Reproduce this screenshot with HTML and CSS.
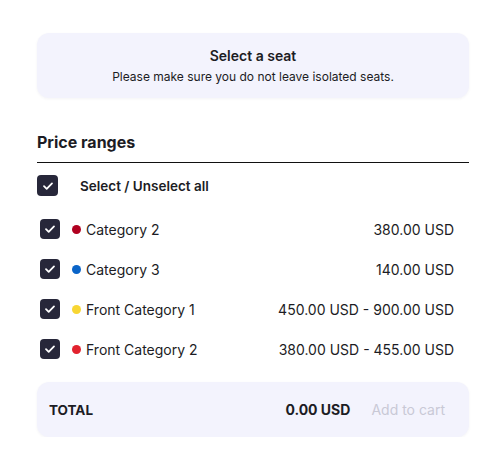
FILE: index.html
```html
<!DOCTYPE html>
<html lang="en">

<head>
    <meta charset="UTF-8" />
    <meta name="viewport" content="width=device-width, initial-scale=1.0" />
    <title>Select a seat</title>
    <link rel="stylesheet" href="styles.css">
</head>

<body>
    <div class="seat-panel">
        <div class="notice-card">
            <h2>Select a seat</h2>
            <p>Please make sure you do not leave isolated seats.</p>
        </div>

        <h3 class="section-title">Price ranges</h3>

        <label class="select-all">
            <span class="checkbox">
                <svg viewBox="0 0 20 20" width="20" height="20"><path d="M6 10.2l2.7 2.6L14 7.4" fill="none" stroke="#fff" stroke-width="1.8" stroke-linecap="round" stroke-linejoin="round"/></svg>
            </span>
            <span class="select-all-text">Select / Unselect all</span>
        </label>

        <ul class="price-list">
            <li class="price-row">
                <span class="checkbox">
                    <svg viewBox="0 0 20 20" width="20" height="20"><path d="M6 10.2l2.7 2.6L14 7.4" fill="none" stroke="#fff" stroke-width="1.8" stroke-linecap="round" stroke-linejoin="round"/></svg>
                </span>
                <span class="dot dot-cat2"></span>
                <span class="category">Category 2</span>
                <span class="price">380.00 USD</span>
            </li>
            <li class="price-row">
                <span class="checkbox">
                    <svg viewBox="0 0 20 20" width="20" height="20"><path d="M6 10.2l2.7 2.6L14 7.4" fill="none" stroke="#fff" stroke-width="1.8" stroke-linecap="round" stroke-linejoin="round"/></svg>
                </span>
                <span class="dot dot-cat3"></span>
                <span class="category">Category 3</span>
                <span class="price">140.00 USD</span>
            </li>
            <li class="price-row">
                <span class="checkbox">
                    <svg viewBox="0 0 20 20" width="20" height="20"><path d="M6 10.2l2.7 2.6L14 7.4" fill="none" stroke="#fff" stroke-width="1.8" stroke-linecap="round" stroke-linejoin="round"/></svg>
                </span>
                <span class="dot dot-front1"></span>
                <span class="category">Front Category 1</span>
                <span class="price">450.00 USD - 900.00 USD</span>
            </li>
            <li class="price-row">
                <span class="checkbox">
                    <svg viewBox="0 0 20 20" width="20" height="20"><path d="M6 10.2l2.7 2.6L14 7.4" fill="none" stroke="#fff" stroke-width="1.8" stroke-linecap="round" stroke-linejoin="round"/></svg>
                </span>
                <span class="dot dot-front2"></span>
                <span class="category">Front Category 2</span>
                <span class="price">380.00 USD - 455.00 USD</span>
            </li>
        </ul>

        <div class="total-card">
            <span class="total-label">TOTAL</span>
            <span class="total-amount">0.00 USD</span>
            <button type="button" class="cart-button" disabled>Add to cart</button>
        </div>
    </div>
</body>

</html>
```

FILE: styles.css
```css
/* Base Styles */
body {
    margin: 0;
    background-color: #fff;
    font-family: "Inter", "Noto Sans", sans-serif;
    color: #1c1c24;
}

.seat-panel {
    width: 432px;
    padding: 33px 0 0 37px;
}

/* Notice Card */
.notice-card {
    background-color: #f3f3fd;
    border-radius: 12px;
    padding: 14px 10px 13px;
    text-align: center;
    box-shadow: 0 1px 3px rgba(40, 40, 80, 0.05);
}

.notice-card h2 {
    margin: 0;
    font-size: 14px;
    font-weight: 600;
    line-height: 18px;
}

.notice-card p {
    margin: 4px 0 0;
    font-size: 12px;
    line-height: 16px;
}

/* Price ranges */
.section-title {
    margin: 34px 0 0;
    font-size: 16px;
    font-weight: 700;
    line-height: 20px;
    padding-bottom: 10px;
    border-bottom: 1.5px solid #111;
}

.select-all {
    display: flex;
    align-items: center;
    margin-top: 12px;
    height: 21px;
}

.select-all .checkbox {
    width: 21px;
    height: 21px;
}

.select-all-text {
    margin-left: 22px;
    font-size: 13.5px;
    font-weight: 600;
}

.checkbox {
    display: flex;
    align-items: center;
    justify-content: center;
    width: 20px;
    height: 20px;
    background-color: #27273a;
    border-radius: 4px;
    flex-shrink: 0;
}

.price-list {
    list-style: none;
    margin: 13px 0 0;
    padding: 0 15px 0 3px;
}

.price-row {
    display: flex;
    align-items: center;
    height: 40px;
    font-size: 14px;
}

.dot {
    width: 9px;
    height: 9px;
    border-radius: 50%;
    margin: 0 5px 0 12px;
}

.dot-cat2 { background-color: #b00020; }
.dot-cat3 { background-color: #0a64c8; }
.dot-front1 { background-color: #f8d633; }
.dot-front2 { background-color: #e2222e; }

.category {
    flex: 1;
}

.price {
    text-align: right;
}

/* Total Card */
.total-card {
    display: flex;
    align-items: center;
    margin-top: 13px;
    height: 55px;
    padding: 0 24px 0 12px;
    background-color: #f3f3fd;
    border-radius: 12px;
    box-shadow: 0 1px 3px rgba(40, 40, 80, 0.05);
}

.total-label {
    flex: 1;
    font-size: 13.5px;
    font-weight: 700;
}

.total-amount {
    font-size: 14px;
    font-weight: 700;
}

.cart-button {
    margin-left: 21px;
    padding: 0;
    border: none;
    background: none;
    font-family: inherit;
    font-size: 14px;
    color: #c9c9d6;
    cursor: default;
}
```
